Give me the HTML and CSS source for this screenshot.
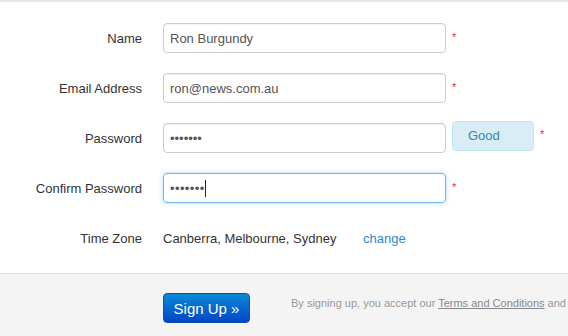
FILE: index.html
```html
<!DOCTYPE html>
<html lang="en">
<head>
    <meta charset="UTF-8">
    <meta name="viewport" content="width=device-width, initial-scale=1.0">
    <title>Sign Up</title>
    <link rel="stylesheet" href="styles.css">
</head>
<body>
    <form class="signup" onsubmit="return false">
        <div class="fields">
            <div class="row">
                <label class="label" for="name">Name</label>
                <input class="field" type="text" id="name" value="Ron Burgundy">
                <span class="req">*</span>
            </div>
            <div class="row">
                <label class="label" for="email">Email Address</label>
                <input class="field" type="email" id="email" value="ron@news.com.au">
                <span class="req">*</span>
            </div>
            <div class="row">
                <label class="label" for="password">Password</label>
                <input class="field" type="password" id="password" value="1234567">
                <span class="strength">Good</span>
                <span class="req">*</span>
            </div>
            <div class="row">
                <label class="label" for="confirm">Confirm Password</label>
                <div class="field focused" id="confirm"><span class="dots">&bull;&bull;&bull;&bull;&bull;&bull;&bull;</span><span class="caret"></span></div>
                <span class="req">*</span>
            </div>
            <div class="row">
                <span class="label">Time Zone</span>
                <span class="zone">Canberra, Melbourne, Sydney</span>
                <a class="change" href="#">change</a>
            </div>
        </div>
        <div class="actions">
            <button class="btn" type="submit">Sign Up &raquo;</button>
            <p class="terms">By signing up, you accept our <a href="#">Terms and Conditions</a> and <a href="#">Privacy Policy</a></p>
        </div>
    </form>
</body>
</html>
```

FILE: styles.css
```css
body{
    margin: 0;
    font-family: "Liberation Sans", Arial, sans-serif;
    font-size: 13px;
    color: #333;
    background-color: #fff;
    overflow: hidden;
}
.signup{
    border-top: 2px solid #e8e8e8;
}
.fields{
    padding: 21px 0 20px;
}
.row{
    display: flex;
    align-items: center;
    height: 30px;
    margin-bottom: 20px;
}
.row:last-child{
    margin-bottom: 0;
}
.label{
    width: 142px;
    margin-right: 21px;
    text-align: right;
    flex-shrink: 0;
}
.field{
    box-sizing: border-box;
    width: 283px;
    height: 30px;
    padding: 0 6px;
    border: 1px solid #ccc;
    border-radius: 4px;
    font-family: inherit;
    font-size: 13px;
    color: #555;
    box-shadow: inset 0 1px 1px rgba(0,0,0,0.06);
    outline: none;
    flex-shrink: 0;
}
.focused{
    display: flex;
    align-items: center;
    border-color: #74b4ea;
    box-shadow: 0 0 5px rgba(82,168,236,0.45);
}
.dots{
    font-size: 13px;
    letter-spacing: 0.4px;
    color: #555;
}
.caret{
    width: 1px;
    height: 17px;
    background-color: #222;
}
.req{
    align-self: flex-start;
    margin: 8px 0 0 6px;
    font-size: 11px;
    color: #e4284f;
}
.strength{
    box-sizing: border-box;
    width: 82px;
    height: 30px;
    margin: -4px 0 0 6px;
    padding-left: 15px;
    line-height: 28px;
    background-color: #d9edf7;
    border: 1px solid #bce8f1;
    border-radius: 4px;
    color: #3a87ad;
    flex-shrink: 0;
}
.row .strength + .req{
    margin-top: 5px;
}
.zone{
    width: 200px;
}
.change{
    color: #2b8ad6;
    text-decoration: none;
}
.actions{
    display: flex;
    align-items: flex-start;
    height: 43px;
    padding: 19px 0 0 163px;
    border-top: 1px solid #e0e0e0;
    background-color: #f4f4f4;
    white-space: nowrap;
    overflow: hidden;
}
.btn{
    flex-shrink: 0;
    width: 87px;
    height: 30px;
    padding: 0;
    border: 1px solid #0a4fb8;
    border-radius: 4px;
    background: linear-gradient(#0a8ad6, #0046c8);
    color: #fff;
    font-family: inherit;
    font-size: 15px;
    cursor: pointer;
}
.terms{
    margin: 4px 0 0 41px;
    font-size: 11px;
    color: #999;
}
.terms a{
    color: #888;
}
```
